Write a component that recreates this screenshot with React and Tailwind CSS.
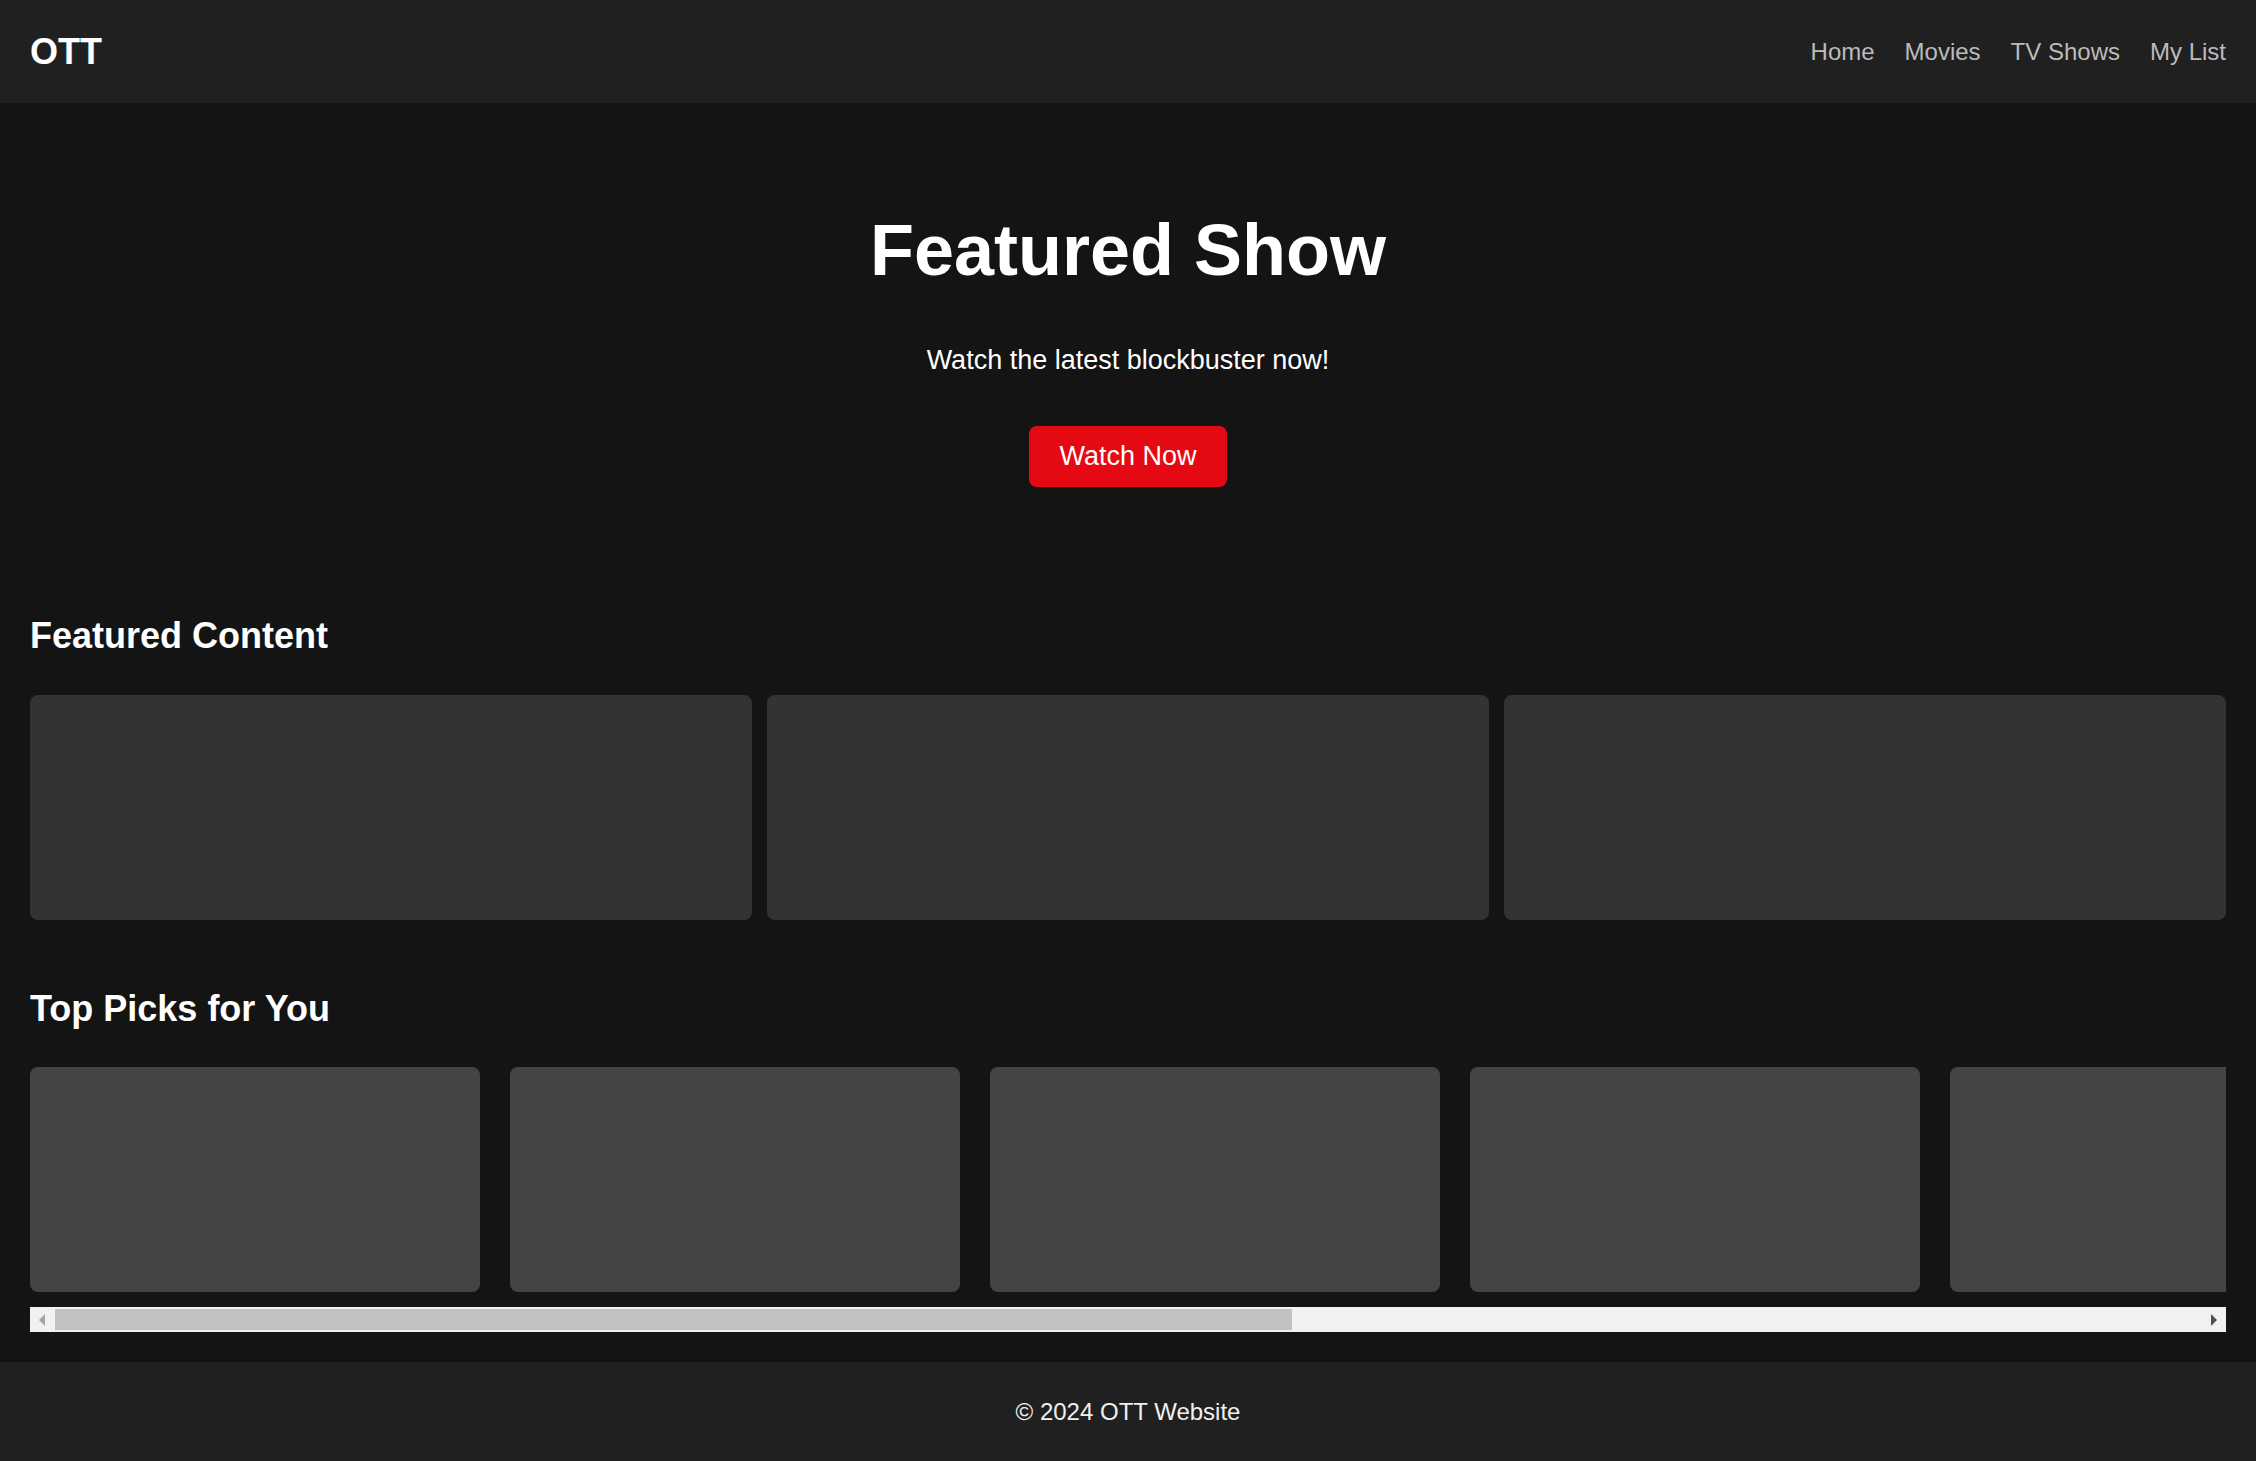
const navLinks = ["Home", "Movies", "TV Shows", "My List"];
const featured = [1, 2, 3];
const picks = [1, 2, 3, 4, 5];

const App = () => {
  return (
    <div className="min-h-screen bg-[#141414] text-white font-['Liberation_Sans',Arial,sans-serif]">
      {/* Header */}
      <header className="h-[103px] px-[30px] flex items-center justify-between bg-[#202020]">
        <h1 className="text-[36px] leading-[41px] font-bold">OTT</h1>
        <nav className="flex gap-[30px]">
          {navLinks.map((link) => (
            <a key={link} href="#" className="text-[24px] leading-[28px] text-[#bbbbbb]">
              {link}
            </a>
          ))}
        </nav>
      </header>

      {/* Hero */}
      <section className="pt-[106px] flex flex-col items-center text-center">
        <h2 className="text-[72px] leading-[83px] font-bold">Featured Show</h2>
        <p className="mt-[53px] text-[27px] leading-[31px]">Watch the latest blockbuster now!</p>
        <button className="mt-[50px] h-[61px] px-[30px] rounded-[8px] bg-[#e50914] text-[27px] leading-[31px] text-white">
          Watch Now
        </button>
      </section>

      {/* Featured Content */}
      <section className="px-[30px] pt-[128px]">
        <h2 className="text-[36px] leading-[41px] font-bold">Featured Content</h2>
        <div className="mt-[39px] grid grid-cols-3 gap-[15px]">
          {featured.map((item) => (
            <div key={item} className="h-[225px] rounded-[8px] bg-[#333333]"></div>
          ))}
        </div>
      </section>

      {/* Top Picks */}
      <section className="px-[30px] pt-[68px]">
        <h2 className="text-[36px] leading-[41px] font-bold">Top Picks for You</h2>
        <div className="mt-[38px] overflow-hidden">
          <div className="flex gap-[30px]">
            {picks.map((item) => (
              <div key={item} className="w-[450px] h-[225px] shrink-0 rounded-[8px] bg-[#444444]"></div>
            ))}
          </div>
        </div>
        {/* scrollbar */}
        <div className="mt-[15px] h-[25px] flex bg-[#f1f1f1]">
          <div className="w-[25px] h-[25px] flex items-center justify-center">
            <svg width="25" height="25" viewBox="0 0 25 25">
              <polygon points="9,13 15,7 15,19" fill="#a3a3a3" />
            </svg>
          </div>
          <div className="flex-1 py-[2px]">
            <div className="h-full w-[1237px] bg-[#c1c1c1]"></div>
          </div>
          <div className="w-[25px] h-[25px] flex items-center justify-center">
            <svg width="25" height="25" viewBox="0 0 25 25">
              <polygon points="16,13 10,7 10,19" fill="#505050" />
            </svg>
          </div>
        </div>
      </section>

      {/* Footer */}
      <footer className="mt-[30px] h-[99px] flex items-center justify-center bg-[#202020]">
        <p className="text-[24px] leading-[28px] text-[#f0f0f0]">&copy; 2024 OTT Website</p>
      </footer>
    </div>
  );
};

export default App;
